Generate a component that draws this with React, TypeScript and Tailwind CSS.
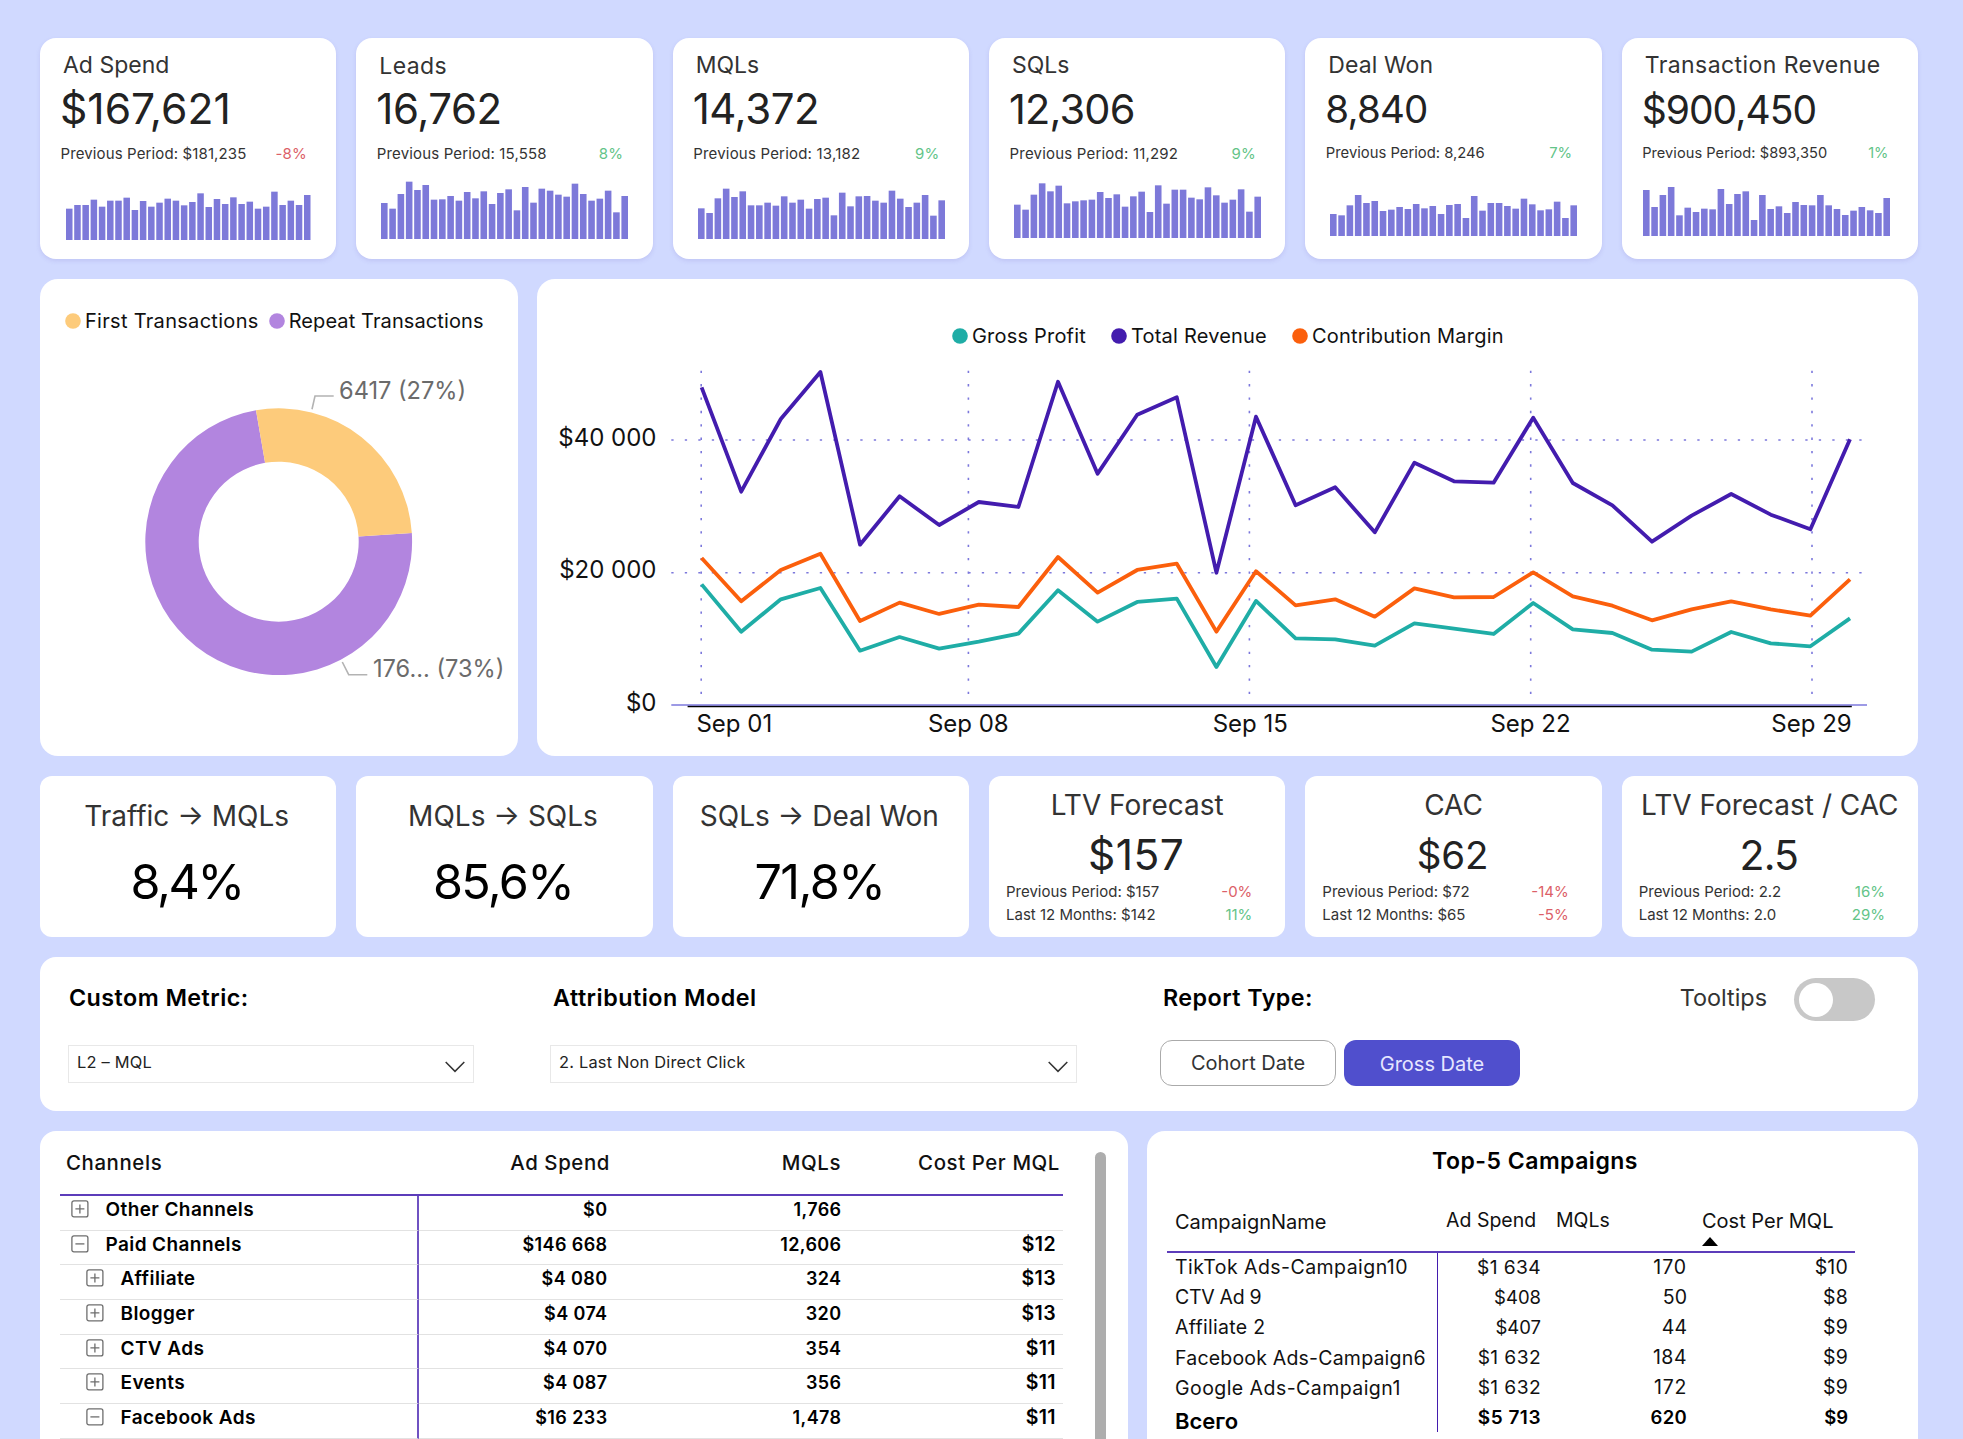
import { ReactNode } from "react";

const kpis = [
  {
    title: "Ad Spend", value: "$167,621", prev: "$181,235", change: "-8%", titleClass: "", valueClass: "text-[42.6px]", prevClass: "text-[15px] tracking-[0.12px]", barsClass: "ml-[26px] mb-[19px]", width: 244.5,
    bars: [94, 105, 105, 121, 100, 118, 118, 127, 90, 117, 100, 112, 124, 118, 104, 114, 140, 99, 123, 108, 128, 108, 115, 94, 100, 145, 105, 118, 105, 135],
  },
  {
    title: "Leads", value: "16,762", prev: "15,558", change: "8%", titleClass: "pt-[1px] tracking-[0.4px]", valueClass: "text-[42px] tracking-[-0.01em]", prevClass: "text-[15px] tracking-[0.15px]", barsClass: "ml-[25px] mb-[20px]", width: 247,
    bars: [108, 91, 135, 172, 147, 162, 118, 119, 129, 115, 141, 122, 143, 105, 138, 149, 86, 156, 109, 151, 145, 133, 127, 166, 135, 115, 121, 145, 80, 129],
  },
  {
    title: "MQLs", value: "14,372", prev: "13,182", change: "9%", titleClass: "", valueClass: "text-[42px] tracking-[-0.01em]", prevClass: "text-[15px] tracking-[0.2px]", barsClass: "ml-[25px] mb-[20px]", width: 247,
    bars: [92, 78, 122, 151, 126, 143, 101, 101, 109, 100, 128, 109, 118, 91, 120, 124, 71, 139, 98, 128, 129, 115, 109, 145, 121, 96, 109, 132, 70, 116],
  },
  {
    title: "SQLs", value: "12,306", prev: "11,292", change: "9%", titleClass: "", valueClass: "text-[41.5px] tracking-[-0.02em]", prevClass: "text-[15px] tracking-[0.2px]", barsClass: "ml-[25px] mb-[21px]", width: 247,
    bars: [100, 85, 130, 164, 140, 157, 104, 110, 113, 115, 138, 120, 131, 94, 125, 139, 78, 158, 103, 145, 145, 121, 116, 152, 128, 106, 115, 146, 79, 124],
  },
  {
    title: "Deal Won", value: "8,840", prev: "8,246", change: "7%", titleClass: "tracking-[0.1px]", valueClass: "text-[38.5px] tracking-[-0.02em]", prevClass: "text-[14.8px]", barsClass: "ml-[25px] mb-[23px]", width: 247,
    bars: [66, 62, 92, 123, 99, 105, 75, 79, 87, 81, 96, 83, 90, 66, 93, 96, 54, 120, 76, 99, 99, 90, 82, 112, 95, 77, 80, 103, 54, 92],
  },
  {
    title: "Transaction Revenue", value: "$900,450", prev: "$893,350", change: "1%", titleClass: "tracking-[0.43px]", valueClass: "text-[39px] tracking-[-0.025em] pt-[1px]", prevClass: "text-[14.6px] tracking-[0.05px]", barsClass: "ml-[21px] mb-[23px]", width: 247,
    bars: [138, 87, 123, 147, 62, 85, 72, 82, 80, 141, 96, 126, 134, 48, 123, 81, 89, 69, 102, 93, 92, 123, 92, 81, 63, 76, 87, 77, 69, 114],
  },
];

const rates = [
  { title: "Traffic → MQLs", value: "8,4%", valueClass: "tracking-[-0.05em]" },
  { title: "MQLs → SQLs", value: "85,6%", valueClass: "tracking-[-0.035em]" },
  { title: "SQLs → Deal Won", value: "71,8%", valueClass: "tracking-[-0.033em]" },
];

const forecasts = [
  { title: "LTV Forecast", value: "$157", valueClass: "text-[42.5px] tracking-[0.01em]", prev: "$157", prevChange: "-0%", year: "$142", yearChange: "11%" },
  { title: "CAC", value: "$62", valueClass: "text-[38.5px] tracking-[-0.005em]", prev: "$72", prevChange: "-14%", year: "$65", yearChange: "-5%" },
  { title: "LTV Forecast / CAC", value: "2.5", valueClass: "text-[41px] tracking-[-0.02em]", prev: "2.2", prevChange: "16%", year: "2.0", yearChange: "29%" },
];

// thousands of dollars per day
const series = [
  {
    name: "Contribution Margin",
    color: "#fb5f0c",
    data: [22.19, 15.65, 20.38, 22.84, 12.68, 15.45, 13.74, 15.14, 14.79, 22.34, 16.96, 20.38, 21.33, 11.07, 20.18, 15.04, 15.95, 13.33, 17.61, 16.25, 16.3, 20.03, 16.4, 14.99, 12.78, 14.44, 15.65, 14.44, 13.48, 18.97],
  },
  {
    name: "Total Revenue",
    color: "#431cae",
    data: [47.95, 32.2, 43.17, 50.26, 24.2, 31.5, 27.17, 30.64, 29.89, 48.8, 34.92, 43.82, 46.44, 19.97, 43.52, 30.14, 32.86, 26.06, 36.58, 33.76, 33.56, 43.37, 33.51, 30.14, 24.65, 28.58, 31.85, 28.73, 26.52, 40.1],
  },
  {
    name: "Gross Profit",
    color: "#1fada6",
    data: [18.21, 11.07, 15.95, 17.66, 8.2, 10.26, 8.5, 9.56, 10.77, 17.31, 12.58, 15.55, 16.05, 5.74, 15.7, 10.06, 9.91, 8.96, 12.33, 11.52, 10.72, 15.4, 11.42, 10.87, 8.35, 8.05, 11.02, 9.31, 8.86, 13.08],
  },
];

const channels = [
  { name: "Other Channels", spend: "$0", mqls: "1,766", cost: "", open: false, child: false },
  { name: "Paid Channels", spend: "$146 668", mqls: "12,606", cost: "$12", open: true, child: false },
  { name: "Affiliate", spend: "$4 080", mqls: "324", cost: "$13", open: false, child: true },
  { name: "Blogger", spend: "$4 074", mqls: "320", cost: "$13", open: false, child: true },
  { name: "CTV Ads", spend: "$4 070", mqls: "354", cost: "$11", open: false, child: true },
  { name: "Events", spend: "$4 087", mqls: "356", cost: "$11", open: false, child: true },
  { name: "Facebook Ads", spend: "$16 233", mqls: "1,478", cost: "$11", open: true, child: true },
];

const campaigns = [
  { name: "TikTok Ads-Campaign10", spend: "$1 634", mqls: "170", cost: "$10", nameClass: "tracking-[0.45px]", spendClass: "text-[19.2px] tracking-[0.4px]", mqlsClass: "tracking-[0.9px]" },
  { name: "CTV Ad 9", spend: "$408", mqls: "50", cost: "$8", nameClass: "tracking-[-0.3px]", spendClass: "text-[18.5px]", mqlsClass: "" },
  { name: "Affiliate 2", spend: "$407", mqls: "44", cost: "$9", nameClass: "tracking-[0.3px]", spendClass: "text-[18.5px]", mqlsClass: "" },
  { name: "Facebook Ads-Campaign6", spend: "$1 632", mqls: "184", cost: "$9", nameClass: "tracking-[0.2px]", spendClass: "text-[19.2px] tracking-[0.4px]", mqlsClass: "tracking-[0.5px]" },
  { name: "Google Ads-Campaign1", spend: "$1 632", mqls: "172", cost: "$9", nameClass: "tracking-[0.45px]", spendClass: "text-[19.2px] tracking-[0.4px]", mqlsClass: "tracking-[0.7px]" },
];

function Change({ value }: { value: string }) {
  return <span className={value.startsWith("-") ? "text-[#dc5f68]" : "text-[#63c488]"}>{value}</span>;
}

function Sparkline({ bars, width, className }: { bars: number[]; width: number; className: string }) {
  const step = (width + 1.7) / bars.length;
  return (
    <svg width={width} height="60" className={className}>
      {bars.map((v, i) => (
        <rect key={i} x={i * step} y={60 - v / 3} width={step - 1.7} height={v / 3} fill="#7d79d9" />
      ))}
    </svg>
  );
}

function LegendItem({ color, className = "tracking-[0.2px]", children }: { color: string; className?: string; children: ReactNode }) {
  return (
    <div className="flex items-center gap-[4px]">
      <svg width="16" height="16">
        <circle cx="8" cy="8" r="7.8" fill={color} />
      </svg>
      <span className={className}>{children}</span>
    </div>
  );
}

function Donut() {
  const cx = 238.7;
  const cy = 210.7;
  const at = (deg: number, r: number) => {
    const a = (deg * Math.PI) / 180;
    return `${cx + r * Math.sin(a)} ${cy - r * Math.cos(a)}`;
  };
  const arc = (from: number, to: number, large: number) =>
    `M${at(from, 133.4)}A133.4 133.4 0 ${large} 1 ${at(to, 133.4)}L${at(to, 80)}A80 80 0 ${large} 0 ${at(from, 80)}Z`;
  return (
    <svg width="477" height="425" className="block text-[23.6px]">
      <path d={arc(86.3, 350.2, 1)} fill="#b285df" />
      <path d={arc(-9.8, 86.3, 0)} fill="#fdcb7b" />
      <g fill="none" stroke="#b3b3b3" strokeWidth="1.6">
        <path d="M272 78.3L275 65H293.7" />
        <path d="M302.3 331L308.7 343.7H327.3" />
      </g>
      <g fill="#6b6b6b">
        <text x="299" y="67.5">6417 (27%)</text>
        <text x="333" y="345.5">176... (73%)</text>
      </g>
    </svg>
  );
}

function LineChart() {
  const x = (i: number) => 164.6 + i * 39.6;
  const y = (v: number) => 359 - v * 6.625;
  return (
    <svg width="1381" height="410" className="block text-[24px]">
      <g stroke="#7c78dc" strokeWidth="1.6" strokeDasharray="2.3 11.2">
        <path d="M134.3 94H1330" />
        <path d="M134.3 226.7H1330" />
        <g strokeDasharray="2.3 11.08">
          {[164.2, 431.4, 712.4, 993.7, 1275].map((gx) => (
            <path key={gx} d={`M${gx} 24.7V359`} />
          ))}
        </g>
      </g>
      <path d="M150.6 360.4H1314.8" stroke="#000" strokeWidth="1.9" />
      <path d="M134.3 359H1330" stroke="#7c78dc" strokeWidth="1.3" />
      {series.map((s) => (
        <polyline
          key={s.name}
          points={s.data.map((v, i) => `${x(i)},${y(v)}`).join(" ")}
          fill="none"
          stroke={s.color}
          strokeWidth="3.8"
          strokeLinejoin="round"
        />
      ))}
      <g textAnchor="end" fill="#111">
        <text x="119.5" y="99.7">$40 000</text>
        <text x="119.5" y="232.4">$20 000</text>
        <text x="119.5" y="365">$0</text>
      </g>
      <g textAnchor="middle" fill="#111">
        <text x="197.3" y="386.3">Sep 01</text>
        <text x="431.3" y="386.3">Sep 08</text>
        <text x="713.3" y="386.3">Sep 15</text>
        <text x="993.5" y="386.3">Sep 22</text>
        <text x="1274.5" y="386.3">Sep 29</text>
      </g>
    </svg>
  );
}

function Select({ value, className }: { value: string; className: string }) {
  return (
    <div className={`flex h-[38px] items-center justify-between border-[1.5px] border-[#e8e8e8] pl-[8px] pr-[8px] text-[16.4px] leading-none tracking-[0.2px] text-[#222] ${className}`}>
      <span className="pb-[3px]">{value}</span>
      <svg width="20" height="12" className="mt-[5px]" fill="none" stroke="#333" strokeWidth="1.5">
        <path d="M0.7 1L10 10.4L19.3 1" />
      </svg>
    </div>
  );
}

function Expander({ open }: { open: boolean }) {
  return (
    <svg width="18" height="18" fill="none" stroke="#6e6e6e" strokeWidth="1.3">
      <rect x="0.9" y="0.9" width="16" height="16" rx="2" />
      <path d={open ? "M4.4 8.9H13.4" : "M4.4 8.9H13.4M8.9 4.4V13.4"} />
    </svg>
  );
}

export default function App() {
  return (
    <div className="flex h-[1439px] w-[1963px] flex-col gap-5 overflow-hidden whitespace-nowrap bg-[#d0d9ff] pt-[38px] pl-[40px] pr-[45px] font-['Inter',sans-serif] leading-none text-[#111]">
      <div className="grid h-[221px] shrink-0 grid-cols-6 gap-5">
        {kpis.map((k) => (
          <div key={k.title} className="flex min-w-0 flex-col rounded-[16px] bg-white shadow-[0_2px_4px_rgba(120,110,200,0.18)]">
            <h2 className={`mt-[16px] h-[23px] pl-[23px] text-[23px] leading-[23px] text-[#333] ${k.titleClass}`}>{k.title}</h2>
            <div className={`mt-[11px] h-[42px] pl-[20px] leading-[42px] text-[#222] ${k.valueClass}`}>{k.value}</div>
            <div className={`mt-[16px] flex h-[15px] justify-between pl-[20.5px] pr-[29.5px] leading-[15px] text-[#333] ${k.prevClass}`}>
              <span>Previous Period: {k.prev}</span>
              <Change value={k.change} />
            </div>
            <Sparkline bars={k.bars} width={k.width} className={`mt-auto shrink-0 ${k.barsClass}`} />
          </div>
        ))}
      </div>

      <div className="flex h-[477px] shrink-0 gap-[19px]">
        <div className="w-[478px] shrink-0 rounded-[18px] bg-white">
          <div className="flex gap-[10px] pt-[32px] pl-[25px] text-[20px] leading-[20px]">
            <LegendItem color="#fdcb7b" className="tracking-[0.3px]">First Transactions</LegendItem>
            <LegendItem color="#b285df" className="tracking-[0.1px]">Repeat Transactions</LegendItem>
          </div>
          <Donut />
        </div>
        <div className="min-w-0 flex-1 rounded-[18px] bg-white">
          <div className="flex gap-[25px] pt-[47px] pl-[415px] text-[20px] leading-[20px]">
            <LegendItem color="#1fada6">Gross Profit</LegendItem>
            <LegendItem color="#431cae">Total Revenue</LegendItem>
            <LegendItem color="#fb5f0c">Contribution Margin</LegendItem>
          </div>
          <LineChart />
        </div>
      </div>

      <div className="grid h-[161px] shrink-0 grid-cols-6 gap-5">
        {rates.map((r) => (
          <div key={r.title} className="min-w-0 rounded-[12px] bg-white pr-[3px] text-center">
            <h2 className="mt-[26px] text-[28px] text-[#333]">{r.title}</h2>
            <div className={`mt-[28px] text-[48.5px] text-black ${r.valueClass}`}>{r.value}</div>
          </div>
        ))}
        {forecasts.map((f) => (
          <div key={f.title} className="flex min-w-0 flex-col rounded-[12px] bg-white">
            <h2 className="mt-[15px] text-center text-[28px] text-[#333]">{f.title}</h2>
            <div className={`mt-[15px] h-[42px] pr-[2px] text-center leading-[42px] text-[#222] ${f.valueClass}`}>{f.value}</div>
            <div className="mt-[8px] flex justify-between pl-[17px] pr-[33px] text-[15px] text-[#333]">
              <span>Previous Period: {f.prev}</span>
              <Change value={f.prevChange} />
            </div>
            <div className="mt-[8px] flex justify-between pl-[17px] pr-[33px] text-[15px] text-[#333]">
              <span>Last 12 Months: {f.year}</span>
              <Change value={f.yearChange} />
            </div>
          </div>
        ))}
      </div>

      <div className="flex h-[154px] shrink-0 rounded-[16px] bg-white">
        <div className="w-[482px] pt-[29px] pl-[28px]">
          <h3 className="h-[23px] pl-[1px] text-[23.3px] font-semibold tracking-[0.45px] text-black">Custom Metric:</h3>
          <Select value="L2 – MQL" className="mt-[36px] w-[406px]" />
        </div>
        <div className="w-[610px] pt-[29px] pl-[28px]">
          <h3 className="h-[23px] pl-[3px] text-[23.3px] font-semibold tracking-[0.5px] text-black">Attribution Model</h3>
          <Select value="2. Last Non Direct Click" className="mt-[36px] w-[527px]" />
        </div>
        <div className="w-[430px] pt-[29px] pl-[28px]">
          <h3 className="h-[23px] pl-[3px] text-[23.3px] font-semibold tracking-[0.45px] text-black">Report Type:</h3>
          <div className="mt-[31px] flex gap-[8px] text-[20px]">
            <button className="h-[46px] w-[176px] rounded-[12px] border-[1.5px] border-[#aaa] text-[#333]">Cohort Date</button>
            <button className="h-[46px] w-[176px] rounded-[12px] bg-[#504fcd] pt-[2px] text-[#e6e6ff]">Gross Date</button>
          </div>
        </div>
        <div className="flex flex-1 justify-end pt-[21px] pr-[43px]">
          <span className="pt-[8px] text-[23.4px] text-[#333]">Tooltips</span>
          <div className="ml-[27px] flex h-[43px] w-[81px] items-center rounded-full bg-[#c8c8c8] pl-[4.5px]">
            <div className="h-[34px] w-[34px] rounded-full bg-white" />
          </div>
        </div>
      </div>

      <div className="flex h-[330px] shrink-0 gap-[19px]">
        <div className="flex w-[1088px] shrink-0 rounded-t-[16px] bg-white pl-[20px]">
          <div className="w-[1003px]">
            <div className="flex h-[65px] border-b-2 border-[#5c3cba] pt-[22px] text-[20.4px] font-medium tracking-[0.6px]">
              <div className="w-[359px] pl-[6px]">Channels</div>
              <div className="w-[191px] text-right">Ad Spend</div>
              <div className="w-[231px] text-right">MQLs</div>
              <div className="w-[219px] text-right">Cost Per MQL</div>
            </div>
            {channels.map((c) => (
              <div key={c.name} className="flex h-[34.67px] text-[18px] font-semibold tracking-[0.4px] text-black">
                <div className={`flex w-[359px] border-b border-r-2 border-b-[#e2e2e2] border-r-[#6f52c2] pt-[4px] text-[19px] ${c.child ? "pl-[26px]" : "pl-[11px]"}`}>
                  <Expander open={c.open} />
                  <span className="pl-[16.5px]">{c.name}</span>
                </div>
                <div className="w-[188.5px] border-b border-[#e2e2e2] pt-[5px] text-right">{c.spend}</div>
                <div className="w-[234px] border-b border-[#e2e2e2] pt-[5px] text-right">{c.mqls}</div>
                <div className="w-[221.5px] border-b border-[#e2e2e2] pt-[4px] pr-[7px] text-right text-[19.5px]">{c.cost}</div>
              </div>
            ))}
          </div>
          <div className="mt-[21px] ml-[32px] w-[11px] rounded-t-full bg-[#adadad]" />
        </div>

        <div className="min-w-0 flex-1 rounded-t-[18px] bg-white pl-[20px]">
          <h3 className="mt-[19px] pr-[15px] text-center text-[23px] font-semibold tracking-[0.5px] text-black">Top-5 Campaigns</h3>
          <div className="mt-[38px] flex h-[42px] w-[688px] border-b-2 border-[#5c3cba] text-[20px]">
            <div className="w-[270px] pt-[1px] pl-[8px]">CampaignName</div>
            <div className="w-[110px] pl-[9px] text-[19.5px]">Ad Spend</div>
            <div className="w-[155px] pl-[9px] text-[19.5px]">MQLs</div>
            <div>
              <div>Cost Per MQL</div>
              <svg width="16" height="9" className="mt-[6px]">
                <path d="M8 0L16 9H0Z" fill="#000" />
              </svg>
            </div>
          </div>
          <div className="flex text-[19.5px]">
            <div className="flex w-[271px] flex-col border-r border-[#431cae] pt-[5px] pl-[8px]">
              {campaigns.map((c) => (
                <div key={c.name} className={`h-[30.2px] ${c.nameClass}`}>{c.name}</div>
              ))}
              <div className="h-[23px] pt-[1px] text-[22px] font-semibold text-black">Всего</div>
            </div>
            <div className="w-[103px] pt-[5px] text-right">
              {campaigns.map((c) => (
                <div key={c.name} className={`h-[30px] ${c.spendClass}`}>{c.spend}</div>
              ))}
              <div className="text-[19px] font-semibold tracking-[0.5px] text-black">$5 713</div>
            </div>
            <div className="w-[146px] pt-[5px] text-right">
              {campaigns.map((c) => (
                <div key={c.name} className={`h-[30px] ${c.mqlsClass}`}>{c.mqls}</div>
              ))}
              <div className="text-[18.5px] font-semibold tracking-[0.3px] text-black">620</div>
            </div>
            <div className="w-[161px] pt-[5px] text-right">
              {campaigns.map((c) => (
                <div key={c.name} className="h-[30px] tracking-[0.2px]">{c.cost}</div>
              ))}
              <div className="text-[18.5px] font-semibold text-black">$9</div>
            </div>
          </div>
        </div>
      </div>
    </div>
  );
}
